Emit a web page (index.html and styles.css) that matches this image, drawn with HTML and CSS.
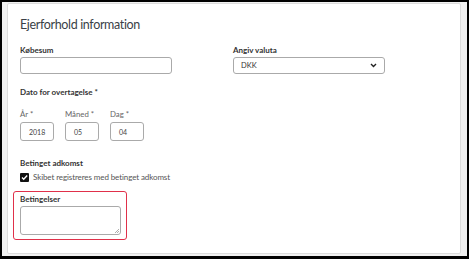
FILE: index.html
```html
<!DOCTYPE html>
<html lang="da">
<head>
  <meta charset="UTF-8" />
  <title>Ejerforhold information</title>
  <link rel="stylesheet" href="styles.css">
</head>
<body>
  <div class="frame">
    <div class="card">
      <h1>Ejerforhold information</h1>

      <div class="row">
        <div class="field">
          <label class="label" for="kobesum">Købesum</label>
          <input type="text" id="kobesum" class="input wide" />
        </div>
        <div class="field">
          <label class="label" for="valuta">Angiv valuta</label>
          <div class="select wide">
            <span>DKK</span>
            <svg width="7" height="5" viewBox="0 0 7 5"><path d="M1 1l2.5 2.5L6 1" fill="none" stroke="#222" stroke-width="1.4"/></svg>
          </div>
        </div>
      </div>

      <div class="label section">Dato for overtagelse *</div>
      <div class="date-row">
        <div class="field">
          <div class="sublabel">År *</div>
          <div class="input small">2018</div>
        </div>
        <div class="field">
          <div class="sublabel">Måned *</div>
          <div class="input small">05</div>
        </div>
        <div class="field">
          <div class="sublabel">Dag *</div>
          <div class="input small">04</div>
        </div>
      </div>

      <div class="label section-2">Betinget adkomst</div>
      <div class="check-row">
        <span class="checkbox">
          <svg width="9" height="9" viewBox="0 0 9 9"><path d="M2 4.6l1.7 1.7L7.2 2.6" fill="none" stroke="#fff" stroke-width="1.4"/></svg>
        </span>
        <span>Skibet registreres med betinget adkomst</span>
      </div>

      <div class="highlight">
        <div class="label">Betingelser</div>
        <div class="textarea">
          <svg class="grip" width="5" height="5" viewBox="0 0 5 5"><path d="M1 5L5 1M3 5L5 3" stroke="#999" stroke-width="0.8"/></svg>
        </div>
      </div>
    </div>
  </div>
</body>
</html>
```

FILE: styles.css
```css
* {
  box-sizing: border-box;
}

body {
  margin: 0;
  background: #000;
  padding: 2px 2px 3px 2px;
  font-family: 'Lato', 'Open Sans', sans-serif;
  color: #333;
}

.frame {
  background: #f0f0f0;
  padding: 1px 6px 3px 5px;
  height: 254px;
}

.card {
  background: #fff;
  border: 1px solid #dcdcdc;
  border-radius: 2px;
  padding: 11px 12px 12px 12px;
  height: 251px;
}

h1 {
  margin: 0;
  font-size: 12.5px;
  line-height: 20px;
  font-weight: 400;
  color: #3a3f47;
  letter-spacing: -0.35px;
}

.row {
  display: grid;
  grid-template-columns: 152px 152px;
  column-gap: 61px;
  margin-top: 9px;
}

.label {
  display: block;
  font-size: 8px;
  line-height: 12px;
  font-weight: 700;
  color: #333;
  margin-bottom: 1px;
}

.input {
  border: 1px solid #aaa;
  border-radius: 3px;
  background: #fff;
  font-family: inherit;
}

.wide {
  width: 152px;
  height: 17px;
  display: block;
  padding: 0;
}

.select {
  border: 1px solid #aaa;
  border-radius: 3px;
  display: flex;
  align-items: center;
  justify-content: space-between;
  padding: 0 7px 0 7px;
  font-size: 7.5px;
  color: #333;
}

.section {
  margin-top: 12px;
  margin-bottom: 10px;
}

.date-row {
  display: flex;
  gap: 11px;
}

.sublabel {
  font-size: 7.8px;
  line-height: 12px;
  color: #666;
  margin-bottom: 2px;
}

.small {
  width: 34px;
  height: 19px;
  display: flex;
  align-items: center;
  padding-left: 8px;
  font-size: 7px;
  color: #444;
}

.section-2 {
  margin-top: 16px;
}

.check-row {
  display: flex;
  align-items: center;
  gap: 4px;
  height: 12px;
  margin-top: 2px;
  font-size: 8px;
  letter-spacing: -0.1px;
  color: #555;
}

.checkbox {
  width: 9px;
  height: 9px;
  background: #111;
  border-radius: 1px;
  display: flex;
}

.highlight {
  margin: 8px 0 0 -7px;
  width: 114px;
  border: 1.5px solid #e0304a;
  border-radius: 3px;
  padding: 1px 5px 4px 6px;
}

.textarea {
  position: relative;
  width: 101px;
  height: 29px;
  border: 1px solid #aaa;
  border-radius: 3px;
}

.grip {
  position: absolute;
  right: 1px;
  bottom: 1px;
}
```
